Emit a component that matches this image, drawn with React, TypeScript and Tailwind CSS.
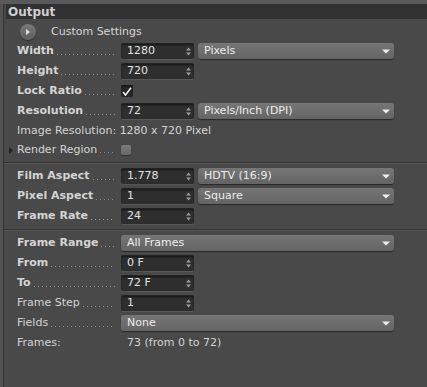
import React from 'react';

const font = { fontFamily: '"DejaVu Sans", "Liberation Sans", sans-serif' };

const Dots: React.FC = () => (
  <div className="flex-1 self-end mb-[6px] ml-[3px] mr-[5px] h-[1px] bg-[linear-gradient(to_right,#8e8e8e_1px,transparent_1px)] bg-[length:4px_1px]" />
);

const Row: React.FC<{ label: string; bold?: boolean; dots?: boolean; children?: React.ReactNode; h?: string }> = ({
  label,
  bold = true,
  dots = true,
  children,
  h = 'h-[20px]',
}) => (
  <div className={`flex items-center ${h}`}>
    <div className="flex items-center w-[116px] h-full pl-[13px]">
      <span className={`whitespace-nowrap ${bold ? 'font-bold' : ''}`}>{label}</span>
      {dots && <Dots />}
    </div>
    <div className="flex items-center gap-[4px] pl-[1px]">{children}</div>
  </div>
);

const NumField: React.FC<{ value: string }> = ({ value }) => (
  <div className="flex items-center justify-between w-[73px] h-[16px] rounded-[2px] bg-[#2e2e2e] border-t border-[#222] shadow-[inset_0_1px_2px_rgba(0,0,0,0.5),0_1px_0_rgba(255,255,255,0.08)] pl-[6px] pr-[3px] text-[#e2e2e2]">
    <span>{value}</span>
    <svg width="5" height="9" viewBox="0 0 5 9">
      <path d="M0 3.5 L2.5 0.5 L5 3.5 Z" fill="#9a9a9a" />
      <path d="M0 5.5 L2.5 8.5 L5 5.5 Z" fill="#9a9a9a" />
    </svg>
  </div>
);

const Select: React.FC<{ value: string; w: string }> = ({ value, w }) => (
  <div className={`flex items-center justify-between ${w} h-[16px] rounded-[3px] bg-gradient-to-b from-[#767676] to-[#646464] shadow-[0_1px_1px_rgba(0,0,0,0.45)] pl-[6px] pr-[4px] text-[#ececec]`}>
    <span>{value}</span>
    <svg width="8" height="5" viewBox="0 0 8 5">
      <path d="M0 0.5 L8 0.5 L4 4.5 Z" fill="#eeeeee" />
    </svg>
  </div>
);

const Separator: React.FC = () => (
  <div className="flex items-center h-[7px]">
    <div className="w-full h-[2px] border-t border-[#343434] border-b border-b-[#555]" />
  </div>
);

const App: React.FC = () => {
  return (
    <div className="w-[427px] h-[387px] bg-[#535353] overflow-hidden text-[11px] text-[#d4d4d4]" style={font}>
      <div className="h-[4px] bg-[#5a5a5a]" />
      <div className="ml-[3px] h-[383px] border-l border-[#343434] bg-[#494949]">
        <div className="ml-[2px] h-[15px] bg-[#313131] flex items-center pl-[2px] font-bold text-[12px] text-[#d0d0d0]">
          Output
        </div>

        <div className="pt-[4px]">
          <div className="flex items-center h-[18px] pl-[16px] gap-[15px]">
            <div className="w-[16px] h-[16px] rounded-full bg-gradient-to-b from-[#7a7a7a] to-[#5e5e5e] shadow-[0_1px_1px_rgba(0,0,0,0.4)] flex items-center justify-center">
              <svg width="4" height="6" viewBox="0 0 4 6">
                <path d="M0 0 L4 3 L0 6 Z" fill="#dddddd" />
              </svg>
            </div>
            <span className="text-[#d8d8d8]">Custom Settings</span>
          </div>

          <Row label="Width">
            <NumField value="1280" />
            <Select value="Pixels" w="w-[196px]" />
          </Row>
          <Row label="Height">
            <NumField value="720" />
          </Row>
          <Row label="Lock Ratio">
            <div className="flex items-center justify-center w-[12px] h-[12px] rounded-[2px] bg-[#262626] shadow-[inset_0_1px_2px_rgba(0,0,0,0.6)]">
              <svg width="10" height="9" viewBox="0 0 10 9">
                <path d="M1 5 L3.5 8 L9 0.8" stroke="#f2f2f2" strokeWidth="1.6" fill="none" />
              </svg>
            </div>
          </Row>
          <Row label="Resolution">
            <NumField value="72" />
            <Select value="Pixels/Inch (DPI)" w="w-[196px]" />
          </Row>
          <div className="flex items-center h-[20px] pl-[13px] whitespace-nowrap">
            Image Resolution: 1280 x 720 Pixel
          </div>
          <div className="relative">
            <svg className="absolute left-[5px] top-[6px]" width="4" height="7" viewBox="0 0 4 7">
              <path d="M0 0 L4 3.5 L0 7 Z" fill="#222222" />
            </svg>
            <Row label="Render Region" bold={false} h="h-[18px]">
              <div className="w-[10px] h-[10px] rounded-[2px] bg-gradient-to-b from-[#7c7c7c] to-[#686868] shadow-[0_1px_1px_rgba(0,0,0,0.4)]" />
            </Row>
          </div>

          <Separator />

          <Row label="Film Aspect">
            <NumField value="1.778" />
            <Select value="HDTV (16:9)" w="w-[196px]" />
          </Row>
          <Row label="Pixel Aspect">
            <NumField value="1" />
            <Select value="Square" w="w-[196px]" />
          </Row>
          <Row label="Frame Rate">
            <NumField value="24" />
          </Row>

          <Separator />

          <Row label="Frame Range">
            <Select value="All Frames" w="w-[273px]" />
          </Row>
          <Row label="From">
            <NumField value="0 F" />
          </Row>
          <Row label="To">
            <NumField value="72 F" />
          </Row>
          <Row label="Frame Step" bold={false}>
            <NumField value="1" />
          </Row>
          <Row label="Fields" bold={false}>
            <Select value="None" w="w-[273px]" />
          </Row>
          <Row label="Frames:" bold={false} dots={false}>
            <span className="whitespace-nowrap pl-[6px]">73 (from 0 to 72)</span>
          </Row>
        </div>
      </div>
    </div>
  );
};

export default App;
